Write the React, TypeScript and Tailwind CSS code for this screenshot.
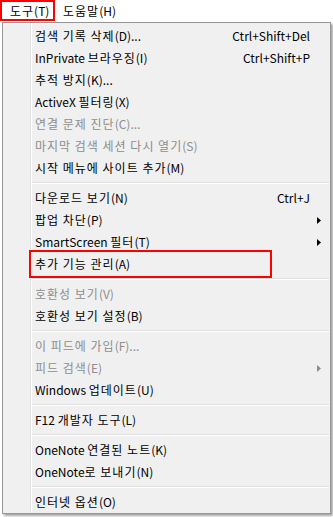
import React from "react";

type Item =
  | { sep: true }
  | {
      sep?: false;
      label: string;
      shortcut?: string;
      disabled?: boolean;
      sub?: boolean;
      boxed?: boolean;
    };

const items: Item[] = [
  { label: "검색 기록 삭제(D)...", shortcut: "Ctrl+Shift+Del" },
  { label: "InPrivate 브라우징(I)", shortcut: "Ctrl+Shift+P" },
  { label: "추적 방지(K)..." },
  { label: "ActiveX 필터링(X)" },
  { label: "연결 문제 진단(C)...", disabled: true },
  { label: "마지막 검색 세션 다시 열기(S)", disabled: true },
  { label: "시작 메뉴에 사이트 추가(M)" },
  { sep: true },
  { label: "다운로드 보기(N)", shortcut: "Ctrl+J" },
  { label: "팝업 차단(P)", sub: true },
  { label: "SmartScreen 필터(T)", sub: true },
  { label: "추가 기능 관리(A)", boxed: true },
  { sep: true },
  { label: "호환성 보기(V)", disabled: true },
  { label: "호환성 보기 설정(B)" },
  { sep: true },
  { label: "이 피드에 가입(F)...", disabled: true },
  { label: "피드 검색(E)", disabled: true, sub: true },
  { label: "Windows 업데이트(U)" },
  { sep: true },
  { label: "F12 개발자 도구(L)" },
  { sep: true },
  { label: "OneNote 연결된 노트(K)" },
  { label: "OneNote로 보내기(N)" },
  { sep: true },
  { label: "인터넷 옵션(O)" },
];

function Txt({ s }: { s: string }) {
  const parts = s.match(/[\uAC00-\uD7A3]+(?: [\uAC00-\uD7A3]+)*|[^\uAC00-\uD7A3]+/g) || [];
  return (
    <span className="whitespace-pre">
      {parts.map((p, i) =>
        /[\uAC00-\uD7A3]/.test(p) ? (
          <span key={i} className="tracking-[1px]">
            {p}
          </span>
        ) : (
          <span key={i}>{p}</span>
        )
      )}
    </span>
  );
}

export default function App() {
  return (
    <div
      className="relative w-[333px] h-[517px] overflow-hidden bg-white text-[12px] text-black"
      style={{ fontFamily: '"Noto Sans CJK KR", "Noto Sans", sans-serif' }}
    >
      {/* menu bar */}
      <div className="flex h-[22px] items-start">
        <div className="h-[21px] w-[55px] border-[2.5px] border-[#ff0000] flex items-center pl-[8px] leading-none">
          <Txt s="도구(T)" />
        </div>
        <div className="h-[21px] flex items-center ml-[8px] leading-none">
          <Txt s="도움말(H)" />
        </div>
      </div>

      {/* dropdown */}
      <div className="ml-[2px] w-[329px] h-[492px] border border-[#979797] bg-[#f0f0f0] shadow-[2px_2px_2px_rgba(0,0,0,0.35)] flex">
        <div className="w-[28px] shrink-0 border-r border-[#e2e3e3]" />
        <div className="flex-1 border-l border-white pt-[2px] flex flex-col">
          {items.map((it, i) =>
            it.sep ? (
              <div key={i} className="h-[8px] flex flex-col justify-center pr-[1px]">
                <div className="h-[1px] bg-[#e0e0e0]" />
                <div className="h-[1px] bg-white" />
              </div>
            ) : (
              <div
                key={i}
                className={`relative h-[22px] flex items-center pl-[3px] leading-none ${
                  it.disabled ? "text-[#8d8d8d]" : "text-black"
                }`}
              >
                <Txt s={it.label} />
                {it.shortcut && <span className="ml-auto">{it.shortcut}</span>}
                <span className={`w-[20px] shrink-0 flex items-center pl-[7px] ${it.shortcut ? "" : "ml-auto"}`}>
                  {it.sub && (
                    <svg width="4" height="7" viewBox="0 0 4 7">
                      <path d="M0 0 L4 3.5 L0 7 Z" fill={it.disabled ? "#8d8d8d" : "#000"} />
                    </svg>
                  )}
                </span>
                {it.boxed && (
                  <div className="absolute left-[-3px] top-[-3px] w-[243px] h-[28px] border-2 border-[#ff0000]" />
                )}
              </div>
            )
          )}
        </div>
      </div>
    </div>
  );
}
